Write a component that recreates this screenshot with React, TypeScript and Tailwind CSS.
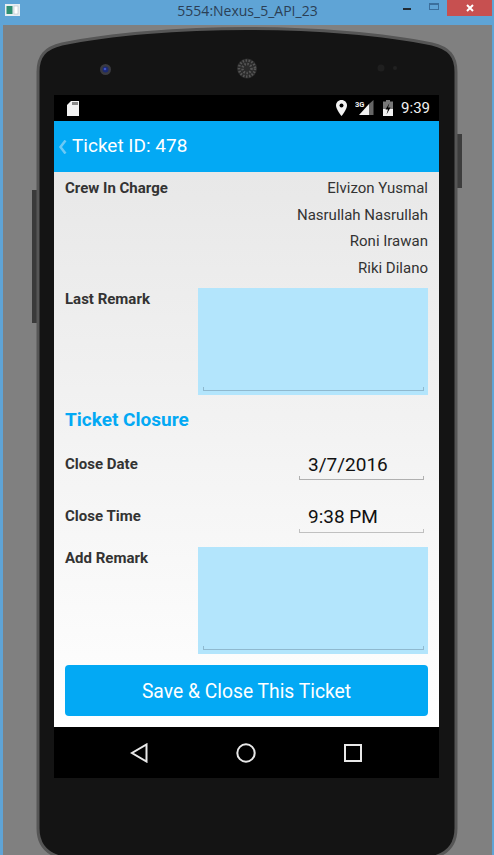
import React from "react";

function PhoneShell() {
  return (
    <svg className="absolute left-0 top-0" width="489" height="830" viewBox="3 25 489 830">
      <rect x="32" y="190" width="6" height="133" fill="#3a3a3a" />
      <rect x="457" y="134" width="5" height="54" fill="#3d3d3d" />
      <path
        d="M38 828 L38 72 C38 56 45 48 62 44 C110 34 180 28.500 247 28.500 C314 28.500 384 34 432 44 C449 48 456 56 456 72 L456 828 C456 846 446 855 430 858 L64 858 C48 855 38 846 38 828 Z"
        fill="#141414"
        stroke="#565656"
        strokeWidth="3"
      />
      <circle cx="105.500" cy="69.500" r="5.500" fill="#3a3a40" />
      <circle cx="105.500" cy="69.500" r="3" fill="#1c2a70" />
      <circle cx="105" cy="69" r="1.300" fill="#3f52c8" />
      <circle cx="247" cy="68.500" r="10" fill="#2b2b2b" />
      <circle cx="247" cy="68.500" r="8" fill="none" stroke="#555" strokeWidth="2.500" strokeDasharray="1.500 1.500" />
      <circle cx="247" cy="68.500" r="4.500" fill="none" stroke="#555" strokeWidth="2.500" strokeDasharray="1.500 1.500" />
      <circle cx="381" cy="68" r="3.500" fill="#1f1f1f" />
      <circle cx="395" cy="68" r="2" fill="#212121" />
    </svg>
  );
}

function StatusBar() {
  return (
    <div className="flex h-[26px] items-center bg-black pl-[13px] pr-[9px] text-[#f2f2f2]">
      <svg width="12" height="15" viewBox="0 0 12 15">
        <path d="M4 0 H12 V15 H0 V4 Z" fill="#f2f2f2" />
        <path d="M6 1 V4 M8 1 V4 M10 1 V4" stroke="#222" strokeWidth="1" />
      </svg>
      <div className="flex-1" />
      <svg width="11" height="16" viewBox="0 0 11 16">
        <path d="M5.500 0 C2.400 0 0 2.400 0 5.500 C0 9.500 5.500 16 5.500 16 C5.500 16 11 9.500 11 5.500 C11 2.400 8.600 0 5.500 0 Z" fill="#f2f2f2" />
        <circle cx="5.500" cy="5.500" r="2" fill="#000" />
      </svg>
      <svg className="ml-[8px]" width="19" height="16" viewBox="0 0 19 16">
        <path d="M4 15 L14 4 V15 Z" fill="#f2f2f2" />
        <path d="M14 4 L18.500 0 V15 H14 Z" fill="#666" />
        <text x="0" y="7" fontSize="7.500" fontWeight="700" fill="#f2f2f2" fontFamily="Roboto, sans-serif">3G</text>
      </svg>
      <svg className="ml-[9px]" width="10" height="16" viewBox="0 0 10 16">
        <path d="M3 0 H7 V1.500 H10 V16 H0 V1.500 H3 Z" fill="#777" />
        <path d="M0 9 H10 V16 H0 Z" fill="#f2f2f2" />
        <path d="M6.500 3 L2.500 9.500 H5 L3.500 14.500 L7.500 7.500 H5 Z" fill="#000" />
      </svg>
      <span className="ml-[8px] text-[15px] leading-none [font-family:Roboto,sans-serif]">9:39</span>
    </div>
  );
}

function RemarkBox() {
  return (
    <div className="flex h-[107px] w-[230px] flex-col justify-end bg-[#b3e5fc] pb-[4px] pl-[5px] pr-[4px]">
      <div className="h-[4px] border-x border-b border-[#8fb9cf]" />
    </div>
  );
}

function PickerField({ value, loose }: { value: string; loose?: boolean }) {
  return (
    <div className="ml-auto mr-[4px] w-[125px]">
      <div className="pl-[9px] text-[19px] leading-[24px] text-[#111]">{value}</div>
      <div className={loose ? "h-[4px] border-x border-b border-[#c0c0c0]" : "mt-[-1px] h-[4px] border-x border-b border-[#b0b0b0]"} />
    </div>
  );
}

export default function App() {
  const crew = ["Elvizon Yusmal", "Nasrullah Nasrullah", "Roni Irawan", "Riki Dilano"];
  return (
    <div className="flex h-[855px] w-[494px] flex-col overflow-hidden bg-[#5fa4d6] [font-family:Roboto,sans-serif]">
      <div className="relative flex h-[25px] items-center justify-center pb-[3px] pl-[1px]">
        <svg className="absolute left-[5px] top-[4px]" width="15" height="12" viewBox="0 0 15 12">
          <rect width="15" height="12" fill="#e8eef2" />
          <rect x="1.500" y="2" width="6" height="8" fill="#2f8f72" />
          <rect x="9" y="2" width="4" height="8" fill="#fff" stroke="#b0b8c0" strokeWidth="0.500" />
        </svg>
        <span className="text-[14px] leading-none text-[#2b3f55] [font-family:'Open_Sans',sans-serif]">5554:Nexus_5_API_23</span>
        <div className="absolute left-[403px] top-[8px] h-[2px] w-[8px] bg-[#222b33]" />
        <div className="absolute left-[429px] top-[3px] h-[7px] w-[10px] border border-t-2 border-[#3b6f9c]" />
        <div className="absolute left-[447px] top-0 flex h-[16px] w-[45px] items-center justify-center bg-[#c75050]">
          <svg width="8" height="8" viewBox="0 0 8 8">
            <path d="M1 1 L7 7 M7 1 L1 7" stroke="#fff" strokeWidth="2" />
          </svg>
        </div>
      </div>

      <div className="relative ml-[3px] mr-[2px] h-[830px] bg-[#808080] pl-[51px] pt-[70px]">
        <PhoneShell />
        <div className="relative flex h-[683px] w-[385px] flex-col">
          <StatusBar />
          <div className="flex h-[51px] items-center bg-[#03a9f4] pl-[4px]">
            <svg width="9" height="14" viewBox="0 0 9 14">
              <path d="M7.500 0.500 L2.500 7 L7.500 13.500" fill="none" stroke="#6cc9f5" strokeWidth="2.500" />
            </svg>
            <span className="ml-[5px] text-[19px] text-white">Ticket ID: 478</span>
          </div>

          <div className="flex flex-1 flex-col bg-gradient-to-b from-[#e8e8e8] to-white px-[11px] pt-[3px] text-[#333]">
            <div className="flex justify-between">
              <div className="text-[15px] font-bold leading-[26.700px]">Crew In Charge</div>
              <div className="text-right text-[15px] leading-[26.700px]">
                {crew.map((n) => (
                  <div key={n}>{n}</div>
                ))}
              </div>
            </div>
            <div className="mt-[6px] flex justify-between">
              <div className="text-[15px] font-bold leading-[22px]">Last Remark</div>
              <RemarkBox />
            </div>
            <div className="mt-[12px] text-[19px] font-bold leading-[26px] text-[#03a9f4]">Ticket Closure</div>
            <div className="mt-[20px] flex h-[34px] items-start">
              <div className="mt-[-1px] text-[15px] font-bold leading-[24px]">Close Date</div>
              <PickerField value="3/7/2016" />
            </div>
            <div className="mt-[18px] flex h-[34px] items-start">
              <div className="mt-[-1px] text-[15px] font-bold leading-[24px]">Close Time</div>
              <PickerField value="9:38 PM" loose />
            </div>
            <div className="mt-[8px] flex justify-between">
              <div className="text-[15px] font-bold leading-[22px]">Add Remark</div>
              <RemarkBox />
            </div>
            <div className="mt-[11px] flex h-[51px] items-center justify-center rounded-[4px] bg-[#03a9f4] pt-[4px] text-[19.300px] text-white">
              Save &amp; Close This Ticket
            </div>
          </div>

          <div className="flex h-[51px] items-center bg-black">
            <div className="ml-[76px]">
              <svg width="18" height="20" viewBox="0 0 18 20" className="block">
                <path d="M16.500 1.500 V18.500 L2 10 Z" fill="none" stroke="#e8e8e8" strokeWidth="2" />
              </svg>
            </div>
            <div className="ml-[88px]">
              <svg width="20" height="20" viewBox="0 0 20 20" className="block">
                <circle cx="10" cy="10" r="8.700" fill="none" stroke="#e8e8e8" strokeWidth="2" />
              </svg>
            </div>
            <div className="ml-[88px]">
              <svg width="18" height="18" viewBox="0 0 18 18" className="block">
                <rect x="1" y="1" width="16" height="16" fill="none" stroke="#e8e8e8" strokeWidth="2" />
              </svg>
            </div>
          </div>
        </div>
      </div>
    </div>
  );
}
